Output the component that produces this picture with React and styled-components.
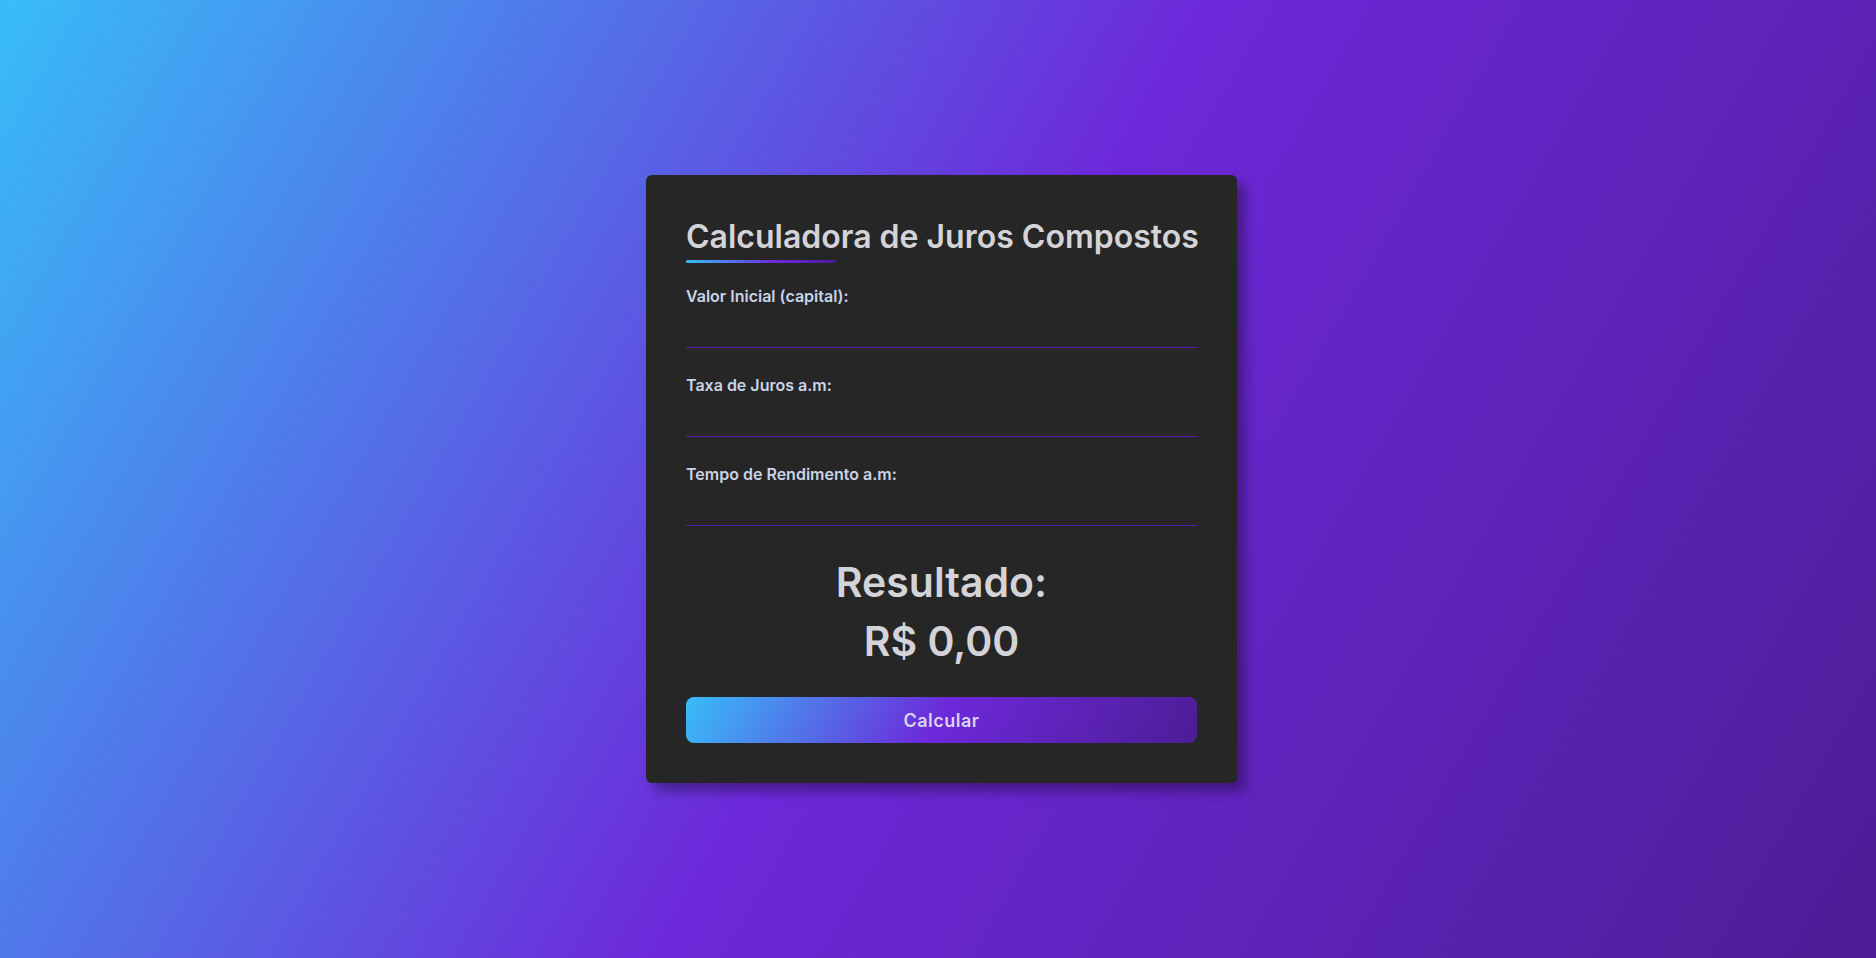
import { useState } from "react";
import styled, { createGlobalStyle } from "styled-components";

const GlobalStyle = createGlobalStyle`
  * {
    box-sizing: border-box;
  }

  body {
    margin: 0;
    font-family: "Inter", "Noto Sans", sans-serif;
  }
`;

const formatBRL = (value) =>
  "R$ " +
  value.toLocaleString("pt-BR", {
    minimumFractionDigits: 2,
    maximumFractionDigits: 2,
  });

const App = () => {
  const [capital, setCapital] = useState("");
  const [taxa, setTaxa] = useState("");
  const [tempo, setTempo] = useState("");
  const [result, setResult] = useState(0);

  const onCalcularClicked = () => {
    const c = parseFloat(capital) || 0;
    const i = (parseFloat(taxa) || 0) / 100;
    const t = parseFloat(tempo) || 0;
    setResult(c * Math.pow(1 + i, t));
  };

  return (
    <Page>
      <GlobalStyle />
      <Card>
        <Title>Calculadora de Juros Compostos</Title>
        <Underline />
        <Fields>
          <Field>
            <Label htmlFor="capital">Valor Inicial (capital):</Label>
            <Input
              id="capital"
              type="number"
              value={capital}
              onChange={(e) => setCapital(e.target.value)}
            />
          </Field>
          <Field>
            <Label htmlFor="taxa">Taxa de Juros a.m:</Label>
            <Input
              id="taxa"
              type="number"
              value={taxa}
              onChange={(e) => setTaxa(e.target.value)}
            />
          </Field>
          <Field>
            <Label htmlFor="tempo">Tempo de Rendimento a.m:</Label>
            <Input
              id="tempo"
              type="number"
              value={tempo}
              onChange={(e) => setTempo(e.target.value)}
            />
          </Field>
        </Fields>
        <Result>
          Resultado:
          <br />
          {formatBRL(result)}
        </Result>
        <Button onClick={onCalcularClicked}>Calcular</Button>
      </Card>
    </Page>
  );
};

const Page = styled.main`
  display: flex;
  align-items: center;
  justify-content: center;
  min-height: 100vh;
  padding-left: 7px;
  background: linear-gradient(120deg, #38bdf8 0%, #6d28d9 50%, #4c1d95 100%);
`;

const Card = styled.section`
  display: flex;
  flex-direction: column;
  width: 591px;
  padding: 40px;
  background-color: #262626;
  border-radius: 6px;
  box-shadow: 8px 8px 12px rgba(0, 0, 0, 0.35);
`;

const Title = styled.h1`
  margin: 0;
  color: #d4d4d8;
  font-size: 32px;
  font-weight: 600;
  line-height: 44px;
  white-space: nowrap;
`;

const Underline = styled.div`
  width: 150px;
  height: 3px;
  margin-top: 1px;
  border-radius: 2px;
  background: linear-gradient(90deg, #38bdf8, #6d28d9 60%, #4c1d95);
`;

const Fields = styled.div`
  display: flex;
  flex-direction: column;
  gap: 27px;
  margin-top: 23px;
`;

const Field = styled.div`
  display: flex;
  flex-direction: column;
`;

const Label = styled.label`
  color: #c9d3e6;
  font-size: 16px;
  font-weight: 600;
  line-height: 21px;
`;

const Input = styled.input`
  height: 41px;
  padding: 0;
  border: none;
  border-bottom: 1px solid #5221ae;
  background: transparent;
  color: #d4d4d8;
  font-family: inherit;
  font-size: 16px;
  outline: none;

  &::-webkit-outer-spin-button,
  &::-webkit-inner-spin-button {
    -webkit-appearance: none;
    margin: 0;
  }
`;

const Result = styled.h2`
  margin: 27px 0 0;
  color: #d4d4d8;
  font-size: 41px;
  font-weight: 600;
  line-height: 59px;
  text-align: center;
`;

const Button = styled.button`
  height: 46px;
  margin-top: 26px;
  border: none;
  border-radius: 8px;
  background: linear-gradient(120deg, #38bdf8 0%, #6d28d9 50%, #4c1d95 100%);
  color: #d9d4f0;
  font-family: inherit;
  font-size: 18px;
  font-weight: 600;
  letter-spacing: 0.5px;
  cursor: pointer;
`;

export default App;
